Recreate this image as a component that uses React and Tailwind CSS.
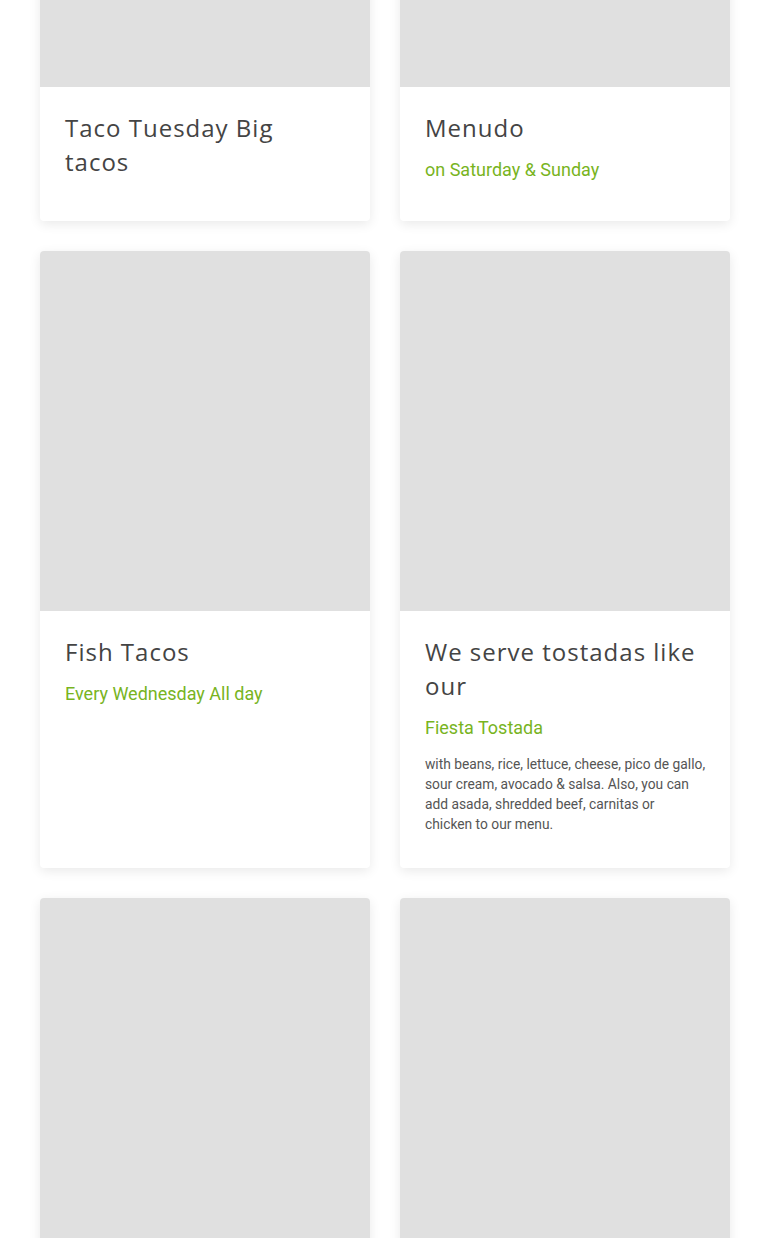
const items = [
  { title: "Taco Tuesday Big tacos" },
  { title: "Menudo", subtitle: "on Saturday & Sunday" },
  { title: "Fish Tacos", subtitle: "Every Wednesday All day" },
  {
    title: "We serve tostadas like our",
    subtitle: "Fiesta Tostada",
    text: "with beans, rice, lettuce, cheese, pico de gallo, sour cream, avocado & salsa. Also, you can add asada, shredded beef, carnitas or",
    tail: "chicken to our menu.",
  },
  { title: "", image: true },
  { title: "", image: true },
];

const Card = ({ item }) => (
  <div className="bg-white rounded-[4px] shadow-[0_3px_12px_rgba(0,0,0,0.09)] overflow-hidden flex flex-col">
    <div className="h-[360px] bg-[#e0e0e0]" />
    {item.title && (
      <div className="pl-[25px] pr-[20px] pt-[24px] pb-[34px] flex-1">
        <h3 className="font-['Open_Sans',sans-serif] text-[24px] leading-[34px] tracking-[1px] text-[#444] font-medium mb-[12px] last:mb-0 pr-[10px]">
          {item.title}
        </h3>
        {item.subtitle && (
          <p className="font-['Roboto',sans-serif] text-[18px] leading-[26px] text-[#78b41e] mb-[13px] last:mb-[4px]">
            {item.subtitle}
          </p>
        )}
        {item.text && (
          <p className="font-['Roboto',sans-serif] text-[13.8px] leading-[20px] text-[#555]">
            {item.text} <span className="whitespace-nowrap">{item.tail}</span>
          </p>
        )}
      </div>
    )}
  </div>
);

export default function App() {
  return (
    <div className="bg-white w-[770px] h-[1238px] overflow-hidden">
      <div className="grid grid-cols-2 gap-[30px] px-[40px] -mt-[273px]">
        {items.map((item, i) => (
          <Card key={i} item={item} />
        ))}
      </div>
    </div>
  );
}
